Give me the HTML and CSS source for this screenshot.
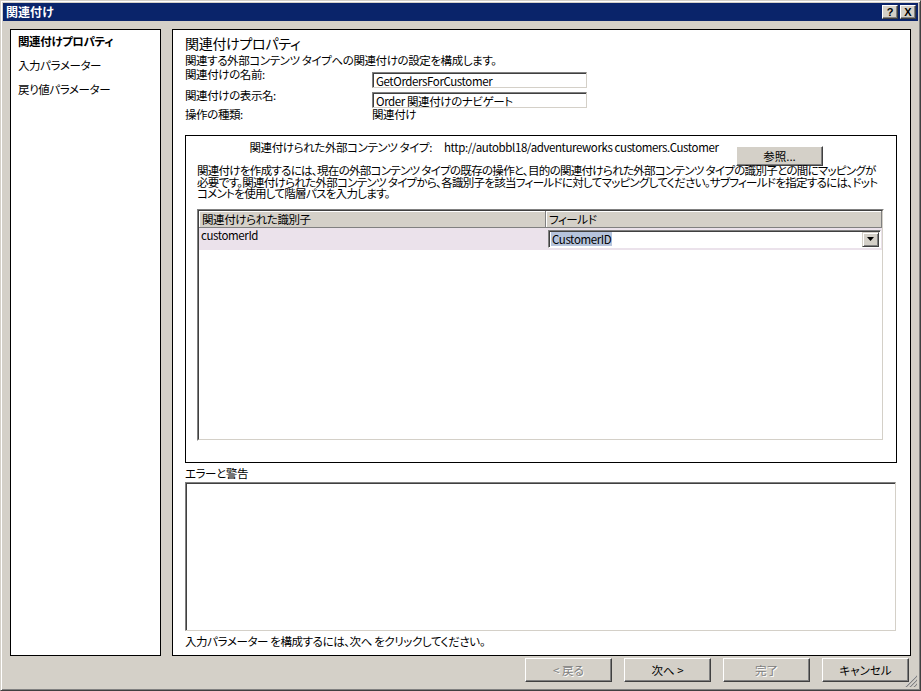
FILE: index.html
```html
<!DOCTYPE html>
<html lang="ja">
<head>
<meta charset="utf-8">
<title>関連付け</title>
<link rel="stylesheet" href="styles.css">
</head>
<body>
<div class="window">
  <header class="titlebar">
    <span class="title">関連付け</span>
    <div class="caption-btns">
      <span class="cbtn">?</span>
      <span class="cbtn">X</span>
    </div>
  </header>
  <div class="client">
    <div class="main">
      <nav class="nav">
        <div class="nav-item active">関連付けプロパティ</div>
        <div class="nav-item">入力パラメーター</div>
        <div class="nav-item">戻り値パラメーター</div>
      </nav>
      <section class="panel">
        <h1 class="heading">関連付けプロパティ</h1>
        <p class="desc">関連する外部コンテンツ タイプへの関連付けの設定を構成します。</p>
        <div class="form">
          <div class="flabel">関連付けの名前:</div>
          <div class="field f1">GetOrdersForCustomer</div>
          <div class="flabel">関連付けの表示名:</div>
          <div class="field f2">Order 関連付けのナビゲート</div>
          <div class="flabel">操作の種類:</div>
          <div class="fvalue">関連付け</div>
        </div>
        <div class="group">
          <div class="type-row">
            <span class="type-label">関連付けられた外部コンテンツ タイプ:</span>
            <span class="type-url">http://autobbl18/adventureworks customers.Customer</span>
            <button class="btn browse">参照...</button>
          </div>
          <p class="help">関連付けを作成するには、現在の外部コンテンツ タイプの既存の操作と、目的の関連付けられた外部コンテンツ タイプの識別子との間にマッピングが<br>必要です。関連付けられた外部コンテンツ タイプから、各識別子を該当フィールドに対してマッピングしてください。サブフィールドを指定するには、ドット<br>コメントを使用して階層パスを入力します。</p>
          <div class="grid">
            <div class="grid-inner">
              <div class="grid-head">
                <div class="gh">関連付けられた識別子</div>
                <div class="gh">フィールド</div>
              </div>
              <div class="grid-row">
                <div class="gc">customerId</div>
                <div class="gc gc-combo">
                  <div class="combo">
                    <span class="sel">CustomerID</span>
                    <span class="drop"><svg width="7" height="4" viewBox="0 0 7 4"><path d="M0 0h7L3.5 4z" fill="#000"/></svg></span>
                  </div>
                </div>
              </div>
            </div>
          </div>
        </div>
        <div class="err-label">エラーと警告</div>
        <div class="err-box"></div>
        <div class="hint">入力パラメーター を構成するには、次へ をクリックしてください。</div>
      </section>
    </div>
    <footer class="footer">
      <button class="btn disabled">&lt; 戻る</button>
      <button class="btn">次へ &gt;</button>
      <button class="btn disabled">完了</button>
      <button class="btn">キャンセル</button>
    </footer>
  </div>
  <svg class="grip" width="12" height="12" viewBox="0 0 12 12">
    <path d="M11 1L1 11M11 5L5 11M11 9L9 11" stroke="#fff" stroke-width="1"/>
    <path d="M12 1L1 12M12 5L5 12M12 9L9 12" stroke="#808080" stroke-width="1.2"/>
  </svg>
</div>
</body>
</html>
```
FILE: styles.css
```css
* { box-sizing: border-box; }
html, body { margin: 0; padding: 0; }
body {
  width: 921px;
  height: 691px;
  overflow: hidden;
  background: #d4d0c8;
  color: #000;
  font-family: "Noto Sans CJK JP", sans-serif;
  font-size: 11.5px;
  letter-spacing: -0.4px;
  font-feature-settings: "palt";
}
.window {
  position: relative;
  width: 921px;
  height: 691px;
  display: flex;
  flex-direction: column;
  border: 1px solid;
  border-color: #d4d0c8 #404040 #404040 #d4d0c8;
  box-shadow: inset 1px 1px #fff, inset -1px -1px #808080;
  padding: 2px;
}
.titlebar {
  height: 18px;
  background: #0a246a;
  display: flex;
  align-items: center;
  justify-content: space-between;
  padding: 0 2px 0 3px;
}
.title { color: #fff; font-weight: bold; font-size: 12px; letter-spacing: 0; line-height: 18px; }
.caption-btns { display: flex; gap: 2px; }
.cbtn {
  width: 16px;
  height: 14px;
  background: #d4d0c8;
  border: 1px solid;
  border-color: #fff #404040 #404040 #fff;
  box-shadow: inset -1px -1px #808080;
  font: bold 11px "Liberation Sans", sans-serif;
  letter-spacing: 0;
  display: flex;
  align-items: center;
  justify-content: center;
}
.client { flex: 1; display: flex; flex-direction: column; padding: 8px 7px 0; }
.main { height: 627px; display: flex; gap: 11px; }
.nav { flex: 0 0 151px; background: #fff; border: 1px solid #000; padding: 0 7px; }
.nav-item { height: 24px; line-height: 24px; white-space: nowrap; }
.nav-item:first-child { margin-top: -1px; }
.nav-item.active { font-weight: bold; }
.panel {
  flex: 1;
  min-width: 0;
  background: #fff;
  border: 1px solid #000;
  padding: 4px 13px 0 12px;
  display: flex;
  flex-direction: column;
}
.heading { margin: 0; font-size: 14px; letter-spacing: -0.3px; font-weight: normal; line-height: 18px; }
.desc { margin: 1px 0 0; line-height: 14px; }
.form {
  display: grid;
  grid-template-columns: 187px 215px;
  grid-template-rows: 21px 19px 15px;
  align-items: start;
}
.flabel, .fvalue { line-height: 14px; white-space: nowrap; }
.field {
  width: 215px;
  border: 1px solid;
  border-color: #808080 #d4d0c8 #d4d0c8 #808080;
  box-shadow: inset 1px 1px #404040;
  padding: 1px 0 0 3px;
  line-height: 14px;
  white-space: nowrap;
}
.f1 { margin-top: 5px; height: 16px; }
.f2 { margin-top: 4px; height: 16px; }
.group {
  margin-top: 13px;
  height: 328px;
  border: 1px solid #000;
  padding: 0 12px 0 11px;
}
.type-row {
  display: grid;
  grid-template-columns: 247px 292px 87px;
  align-items: start;
  padding-top: 5px;
}
.type-label { text-align: right; padding-right: 12px; line-height: 12px; white-space: nowrap; }
.type-url { line-height: 12px; white-space: nowrap; }
.btn {
  width: 87px;
  height: 24px;
  padding: 0;
  background: #d4d0c8;
  border: 1px solid;
  border-color: #fff #404040 #404040 #fff;
  box-shadow: inset -1px -1px #808080;
  font: inherit;
  color: #000;
}
.btn.disabled { color: #808080; text-shadow: 1px 1px #fff; }
.browse { height: 20px; margin-top: 5px; }
.help { margin: -1px 0 0; line-height: 11.5px; letter-spacing: -0.7px; white-space: nowrap; }
.grid {
  margin-top: 9.5px;
  height: 232px;
  border: 1px solid;
  border-color: #808080 #fff #fff #808080;
}
.grid-inner {
  height: 100%;
  border: 1px solid;
  border-color: #404040 #d4d0c8 #d4d0c8 #404040;
  background: #fff;
}
.grid-head, .grid-row { display: grid; grid-template-columns: 347px 1fr; }
.gh {
  height: 17px;
  background: #d4d0c8;
  border-right: 1px solid #808080;
  border-bottom: 1px solid #808080;
  box-shadow: inset 1px 1px #fff;
  padding-left: 3px;
  line-height: 16px;
  white-space: nowrap;
}
.grid-row { height: 22px; background: #ebe2eb; }
.gc { padding: 0 0 0 2px; line-height: 14px; }
.gc-combo { padding: 2px 1px 0 2px; }
.combo {
  height: 18px;
  display: flex;
  align-items: center;
  justify-content: space-between;
  background: #fff;
  border: 1px solid;
  border-color: #808080 #fff #fff #808080;
  box-shadow: inset 1px 1px #404040;
  padding: 0 1px 0 2px;
}
.sel { background: #b6c4dc; line-height: 14px; padding: 0 1px; }
.drop {
  width: 17px;
  height: 15px;
  background: #d4d0c8;
  border: 1px solid;
  border-color: #d4d0c8 #404040 #404040 #d4d0c8;
  box-shadow: inset 1px 1px #fff, inset -1px -1px #808080;
  display: flex;
  align-items: center;
  justify-content: center;
}
.err-label { margin-top: 4px; line-height: 12px; }
.err-box {
  margin-top: 3px;
  width: 711px;
  height: 149px;
  border: 1px solid;
  border-color: #808080 #d4d0c8 #d4d0c8 #808080;
  box-shadow: inset 1px 1px #404040;
}
.hint { margin-top: 4px; line-height: 12px; white-space: nowrap; }
.footer {
  height: 32px;
  display: flex;
  justify-content: flex-end;
  gap: 12px;
  padding: 2px 2px 0 0;
}
.grip { position: absolute; right: 3px; bottom: 3px; }
```
